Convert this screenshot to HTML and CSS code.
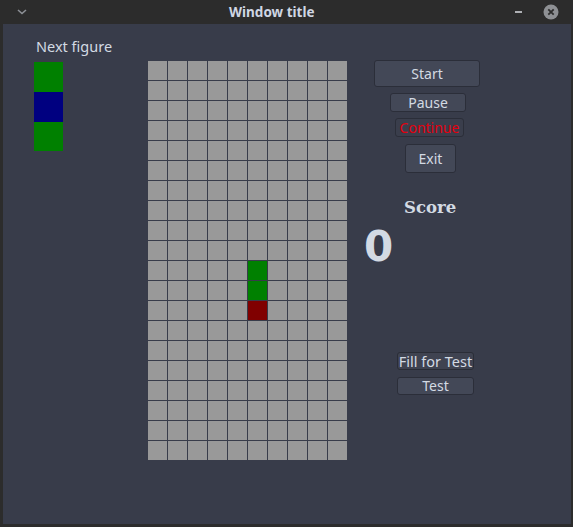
FILE: index.html
```html
<!DOCTYPE html>
<html>
<head>
<meta charset="utf-8">
<link rel="stylesheet" href="styles.css">
</head>
<body>
<div class="window">
  <div class="titlebar">
    <span class="tb-menu"><svg width="10" height="6" viewBox="0 0 10 6"><path d="M1 1 L5 4.5 L9 1" fill="none" stroke="#8d9096" stroke-width="1.6"/></svg></span>
    <span class="tb-title">Window title</span>
    <span class="tb-min"></span>
    <span class="tb-close"><svg width="16" height="16" viewBox="0 0 16 16"><circle cx="8" cy="8" r="7.5" fill="#8e9094"/><path d="M5.3 5.3 L10.7 10.7 M10.7 5.3 L5.3 10.7" stroke="#2d2d2d" stroke-width="1.8"/></svg></span>
  </div>
  <div class="content">
    <div class="left">
      <div class="next-label">Next figure</div>
      <div class="next-piece">
        <div class="nb green"></div>
        <div class="nb blue"></div>
        <div class="nb green"></div>
      </div>
    </div>
    <div class="board">
      <div class="cell green r11"></div>
      <div class="cell green r12"></div>
      <div class="cell red r13"></div>
    </div>
    <div class="right">
      <button class="btn start">Start</button>
      <button class="btn pause">Pause</button>
      <button class="btn cont">Continue</button>
      <button class="btn exit">Exit</button>
      <div class="score-label">Score</div>
      <div class="score">0</div>
      <button class="btn fill">Fill for Test</button>
      <button class="btn test">Test</button>
    </div>
  </div>
</div>
</body>
</html>
```
FILE: styles.css
```css
* { box-sizing: border-box; }
html, body { margin: 0; padding: 0; background: #2b2b2b; }
.window {
  width: 573px;
  height: 527px;
  background: #2c2c2c;
  display: flex;
  flex-direction: column;
  font-family: "Noto Sans", "DejaVu Sans", sans-serif;
}
.titlebar {
  height: 24px;
  display: flex;
  align-items: center;
  position: relative;
  color: #cfd6e3;
}
.tb-menu { margin-left: 17px; display: flex; }
.tb-title {
  position: absolute;
  left: 229px;
  top: 3px;
  font-weight: bold;
  font-size: 13.5px;
  line-height: 18px;
}
.tb-min {
  margin-left: auto;
  width: 7px;
  height: 2px;
  background: #aeb0b4;
  margin-right: 21px;
}
.tb-close { display: flex; margin-right: 14px; }
.content {
  flex: 1;
  margin: 0 2px 3px 3px;
  background: #383c4a;
  display: flex;
  align-items: flex-start;
}
.left {
  width: 145px;
  padding: 12px 0 0 31px;
}
.next-label {
  font-size: 14.5px;
  line-height: 20px;
  color: #d3dae3;
  margin-left: 2px;
}
.next-piece {
  margin-top: 6px;
  width: 29px;
  display: flex;
  flex-direction: column;
}
.nb { height: 30px; }
.nb:nth-child(3) { height: 29px; }
.green { background: #008000; }
.blue { background: #000080; }
.red { background: #800000; }
.board {
  margin-top: 37px;
  width: 199px;
  height: 399px;
  display: grid;
  grid-template-columns: repeat(10, 19px);
  grid-template-rows: repeat(20, 19px);
  gap: 1px;
  background-color: #999999;
  background-image:
    linear-gradient(to right, transparent 19px, #383c4a 19px),
    linear-gradient(to bottom, transparent 19px, #383c4a 19px);
  background-size: 20px 20px, 20px 20px;
}
.cell { grid-column: 6; }
.r11 { grid-row: 11; }
.r12 { grid-row: 12; }
.r13 { grid-row: 13; }
.right {
  display: flex;
  flex-direction: column;
  align-items: flex-start;
  padding-top: 36px;
}
.btn {
  font-family: "Noto Sans", "DejaVu Sans", sans-serif;
  font-size: 14px;
  color: #d3dae3;
  background: #434857;
  border: 1px solid #2b2e39;
  border-radius: 3px;
  padding: 0;
  line-height: 16px;
  white-space: nowrap;
}
.start { margin-left: 27px; width: 106px; height: 27px; }
.pause { margin: 6px 0 0 43px; width: 76px; height: 19px; }
.cont { margin: 6px 0 0 48px; width: 69px; height: 19px; color: #e5000f; background: #3a3e4c; }
.exit { margin: 7px 0 0 58px; width: 51px; height: 29px; }
.score-label {
  margin: 25px 0 0 57px;
  font-family: "DejaVu Serif", serif;
  font-weight: bold;
  font-size: 16.5px;
  line-height: 20px;
  color: #d3dae3;
}
.score {
  margin: 5px 0 0 17px;
  font-family: "DejaVu Sans", sans-serif;
  font-weight: bold;
  font-size: 42px;
  line-height: 48px;
  color: #d3dae3;
}
.fill {
  margin: 81px 0 0 50px;
  width: 77px;
  height: 18px;
  font-size: 14.5px;
  background: #3f4351;
  border-color: #2a2d37;
  display: flex;
  justify-content: center;
  align-items: center;
}
.test { margin: 7px 0 0 50px; width: 77px; height: 18px; }
```
